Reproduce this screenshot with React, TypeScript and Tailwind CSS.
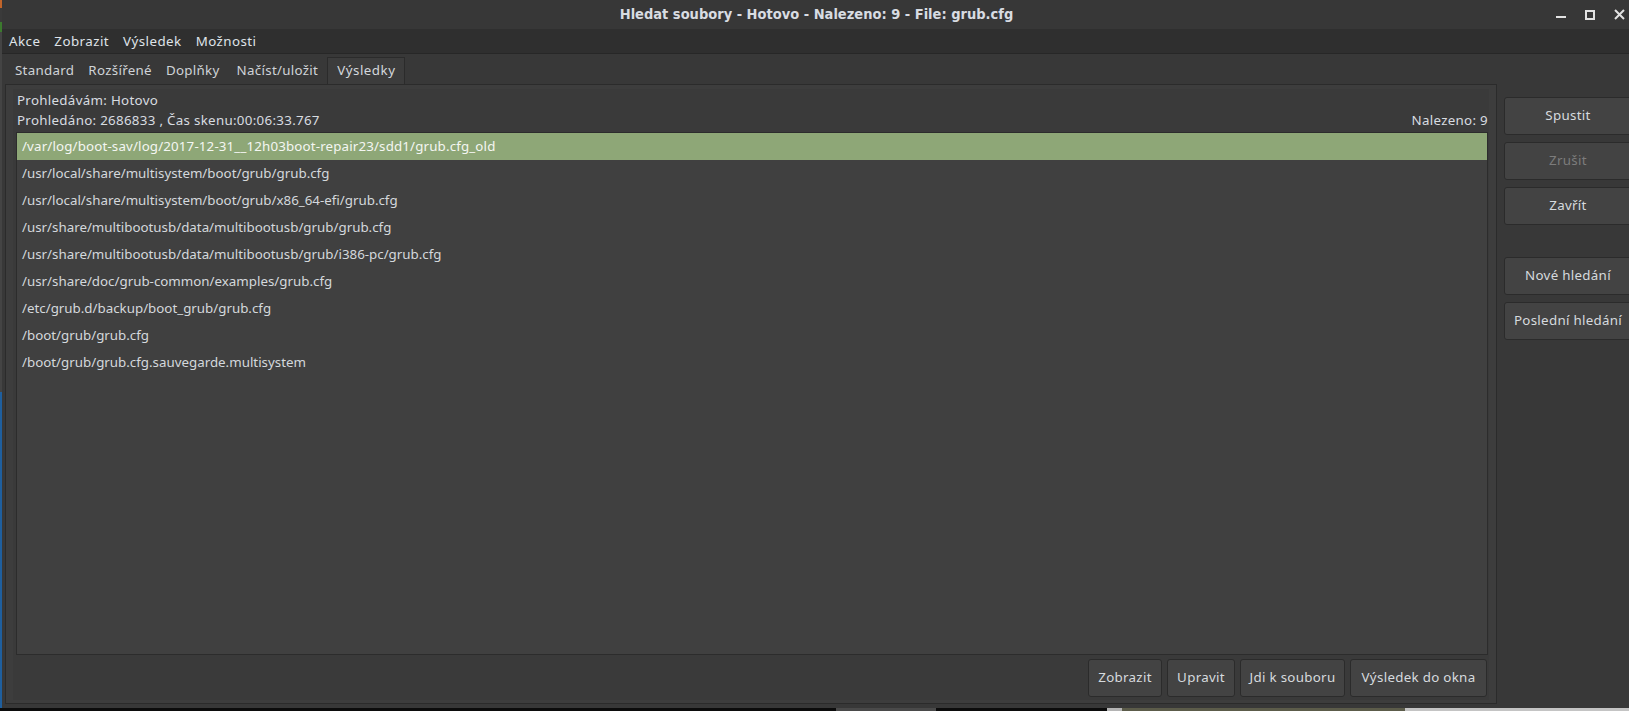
import React from "react";

const results = [
  "/var/log/boot-sav/log/2017-12-31__12h03boot-repair23/sdd1/grub.cfg_old",
  "/usr/local/share/multisystem/boot/grub/grub.cfg",
  "/usr/local/share/multisystem/boot/grub/x86_64-efi/grub.cfg",
  "/usr/share/multibootusb/data/multibootusb/grub/grub.cfg",
  "/usr/share/multibootusb/data/multibootusb/grub/i386-pc/grub.cfg",
  "/usr/share/doc/grub-common/examples/grub.cfg",
  "/etc/grub.d/backup/boot_grub/grub.cfg",
  "/boot/grub/grub.cfg",
  "/boot/grub/grub.cfg.sauvegarde.multisystem",
];

const tabs = ["Standard", "Rozšířené", "Doplňky", "Načíst/uložit", "Výsledky"];
const menus = ["Akce", "Zobrazit", "Výsledek", "Možnosti"];

function Btn({ label, disabled, className = "" }: { label: string; disabled?: boolean; className?: string }) {
  return (
    <button
      className={`h-[38px] rounded-[3px] border border-[#2b2b2b] bg-[#434343] flex items-center justify-center tracking-[0.3px] ${
        disabled ? "text-[#7c7c7c]" : "text-[#d6dade]"
      } ${className}`}
    >
      {label}
    </button>
  );
}

export default function App() {
  return (
    <div
      className="w-[1629px] h-[711px] bg-[#0c0c0c] flex flex-col overflow-hidden text-[13.33px] text-[#d8dce0]"
      style={{ fontFamily: '"Noto Sans", "Open Sans", sans-serif' }}
    >
      <div className="h-[708px] flex shrink-0">
        {/* desktop edge */}
        <div className="w-[2px] flex flex-col shrink-0">
          <div className="h-[8px] bg-[#c0642a]" />
          <div className="h-[14px] bg-[#3a3a3a]" />
          <div className="h-[10px] bg-[#3c7a2e]" />
          <div className="h-[360px] bg-[#444]" />
          <div className="flex-1 bg-[#1f5f9e]" />
        </div>

        <div className="w-[1627px] flex flex-col bg-[#383838] shrink-0">
          {/* title bar */}
          <div className="h-[29px] grid grid-cols-[1fr_auto_1fr] items-center bg-[#373737]">
            <div />
            <div
              className="font-bold text-[14.5px] text-[#d8dce2] pl-[2px]"
              style={{ fontFamily: '"DejaVu Sans Condensed", "DejaVu Sans", sans-serif' }}
            >
              Hledat soubory - Hotovo - Nalezeno: 9 - File: grub.cfg
            </div>
            <div className="flex justify-end items-center gap-[19px] pr-[4px] text-[#e2e2e2]">
              <svg width="10" height="12" viewBox="0 0 10 12">
                <rect x="0" y="7" width="10" height="2" fill="currentColor" />
              </svg>
              <svg width="10" height="10" viewBox="0 0 10 10">
                <rect x="1" y="1" width="8" height="8" fill="none" stroke="currentColor" strokeWidth="2" />
              </svg>
              <svg width="11" height="11" viewBox="0 0 11 11">
                <path d="M1 1 L10 10 M10 1 L1 10" stroke="currentColor" strokeWidth="2" />
              </svg>
            </div>
          </div>

          {/* menu bar */}
          <div className="h-[25px] pt-[1px] bg-[#2f2f2f] border-b border-[#272727] flex items-center gap-[14px] pl-[7px] text-[#dfe3e8] tracking-[0.45px]">
            {menus.map((m) => (
              <span key={m}>{m}</span>
            ))}
          </div>

          <div className="flex-1 flex">
            {/* tab widget */}
            <div className="w-[1495px] pl-[3px] flex flex-col shrink-0">
              <div className="h-[30px] flex items-end pl-[3px] tracking-[0.3px]">
                {tabs.map((t, i) =>
                  i === tabs.length - 1 ? (
                    <div
                      key={t}
                      className="h-[27px] ml-[2px] px-[9px] flex items-center bg-[#3c3c3c] border border-b-0 border-[#2b2b2b] text-[#d3d7db] tracking-[0.5px]"
                    >
                      {t}
                    </div>
                  ) : (
                    <div key={t} className={`h-[27px] px-[7px] flex items-center text-[#cfd3d7] ${i === 3 ? "ml-[3px]" : ""}`}>
                      {t}
                    </div>
                  )
                )}
              </div>
              <div className="h-[620px] border border-[#2b2b2b] bg-[#3d3d3d] pt-[4px] pl-[7px] pr-[7px] pb-[3px] flex">
                <div className="flex-1 bg-[#3a3a3a] flex flex-col pl-[3px] pr-[1px] pt-[1px] pb-[3px]">
                  <div className="h-[20px] leading-[20px] pl-[1px] tracking-[0.3px]">Prohledávám: Hotovo</div>
                  <div className="h-[20px] leading-[20px] pl-[1px] flex justify-between tracking-[0.3px]">
                    <span>Prohledáno: 2686833 , Čas skenu:00:06:33.767</span>
                    <span>Nalezeno: 9</span>
                  </div>
                  <div className="mt-[2px] flex-1 border border-[#2c2c2c] bg-[#404040] flex flex-col">
                    {results.map((r, i) => (
                      <div
                        key={r}
                        className={`h-[27px] leading-[27px] pl-[5px] ${
                          i === 0 ? "bg-[#8ea777] text-[#f4f6f2] tracking-[0.15px]" : "text-[#d4d8dc]"
                        }`}
                      >
                        {r}
                      </div>
                    ))}
                  </div>
                  <div className="mt-[4px] flex justify-end gap-[5px] pr-[1px]">
                    <Btn label="Zobrazit" className="w-[74px]" />
                    <Btn label="Upravit" className="w-[68px]" />
                    <Btn label="Jdi k souboru" className="w-[105px]" />
                    <Btn label="Výsledek do okna" className="w-[137px]" />
                  </div>
                </div>
              </div>
            </div>

            {/* side buttons */}
            <div className="ml-[7px] mt-[43px] w-[128px] shrink-0 flex flex-col gap-[7px]">
              <Btn label="Spustit" />
              <Btn label="Zrušit" disabled />
              <Btn label="Zavřít" />
              <div className="h-[18px]" />
              <Btn label="Nové hledání" />
              <Btn label="Poslední hledání" />
            </div>
          </div>
        </div>
      </div>

      {/* desktop below window */}
      <div className="flex-1 flex">
        <div className="w-[836px] bg-[#0c0c0c]" />
        <div className="w-[100px] bg-[#4a4a4a]" />
        <div className="w-[171px] bg-[#0c0c0c]" />
        <div className="w-[15px] bg-[#b4b4b4]" />
        <div className="w-[283px] bg-[#5c5c4a]" />
        <div className="flex-1 bg-[#c4c4c4]" />
      </div>
    </div>
  );
}
